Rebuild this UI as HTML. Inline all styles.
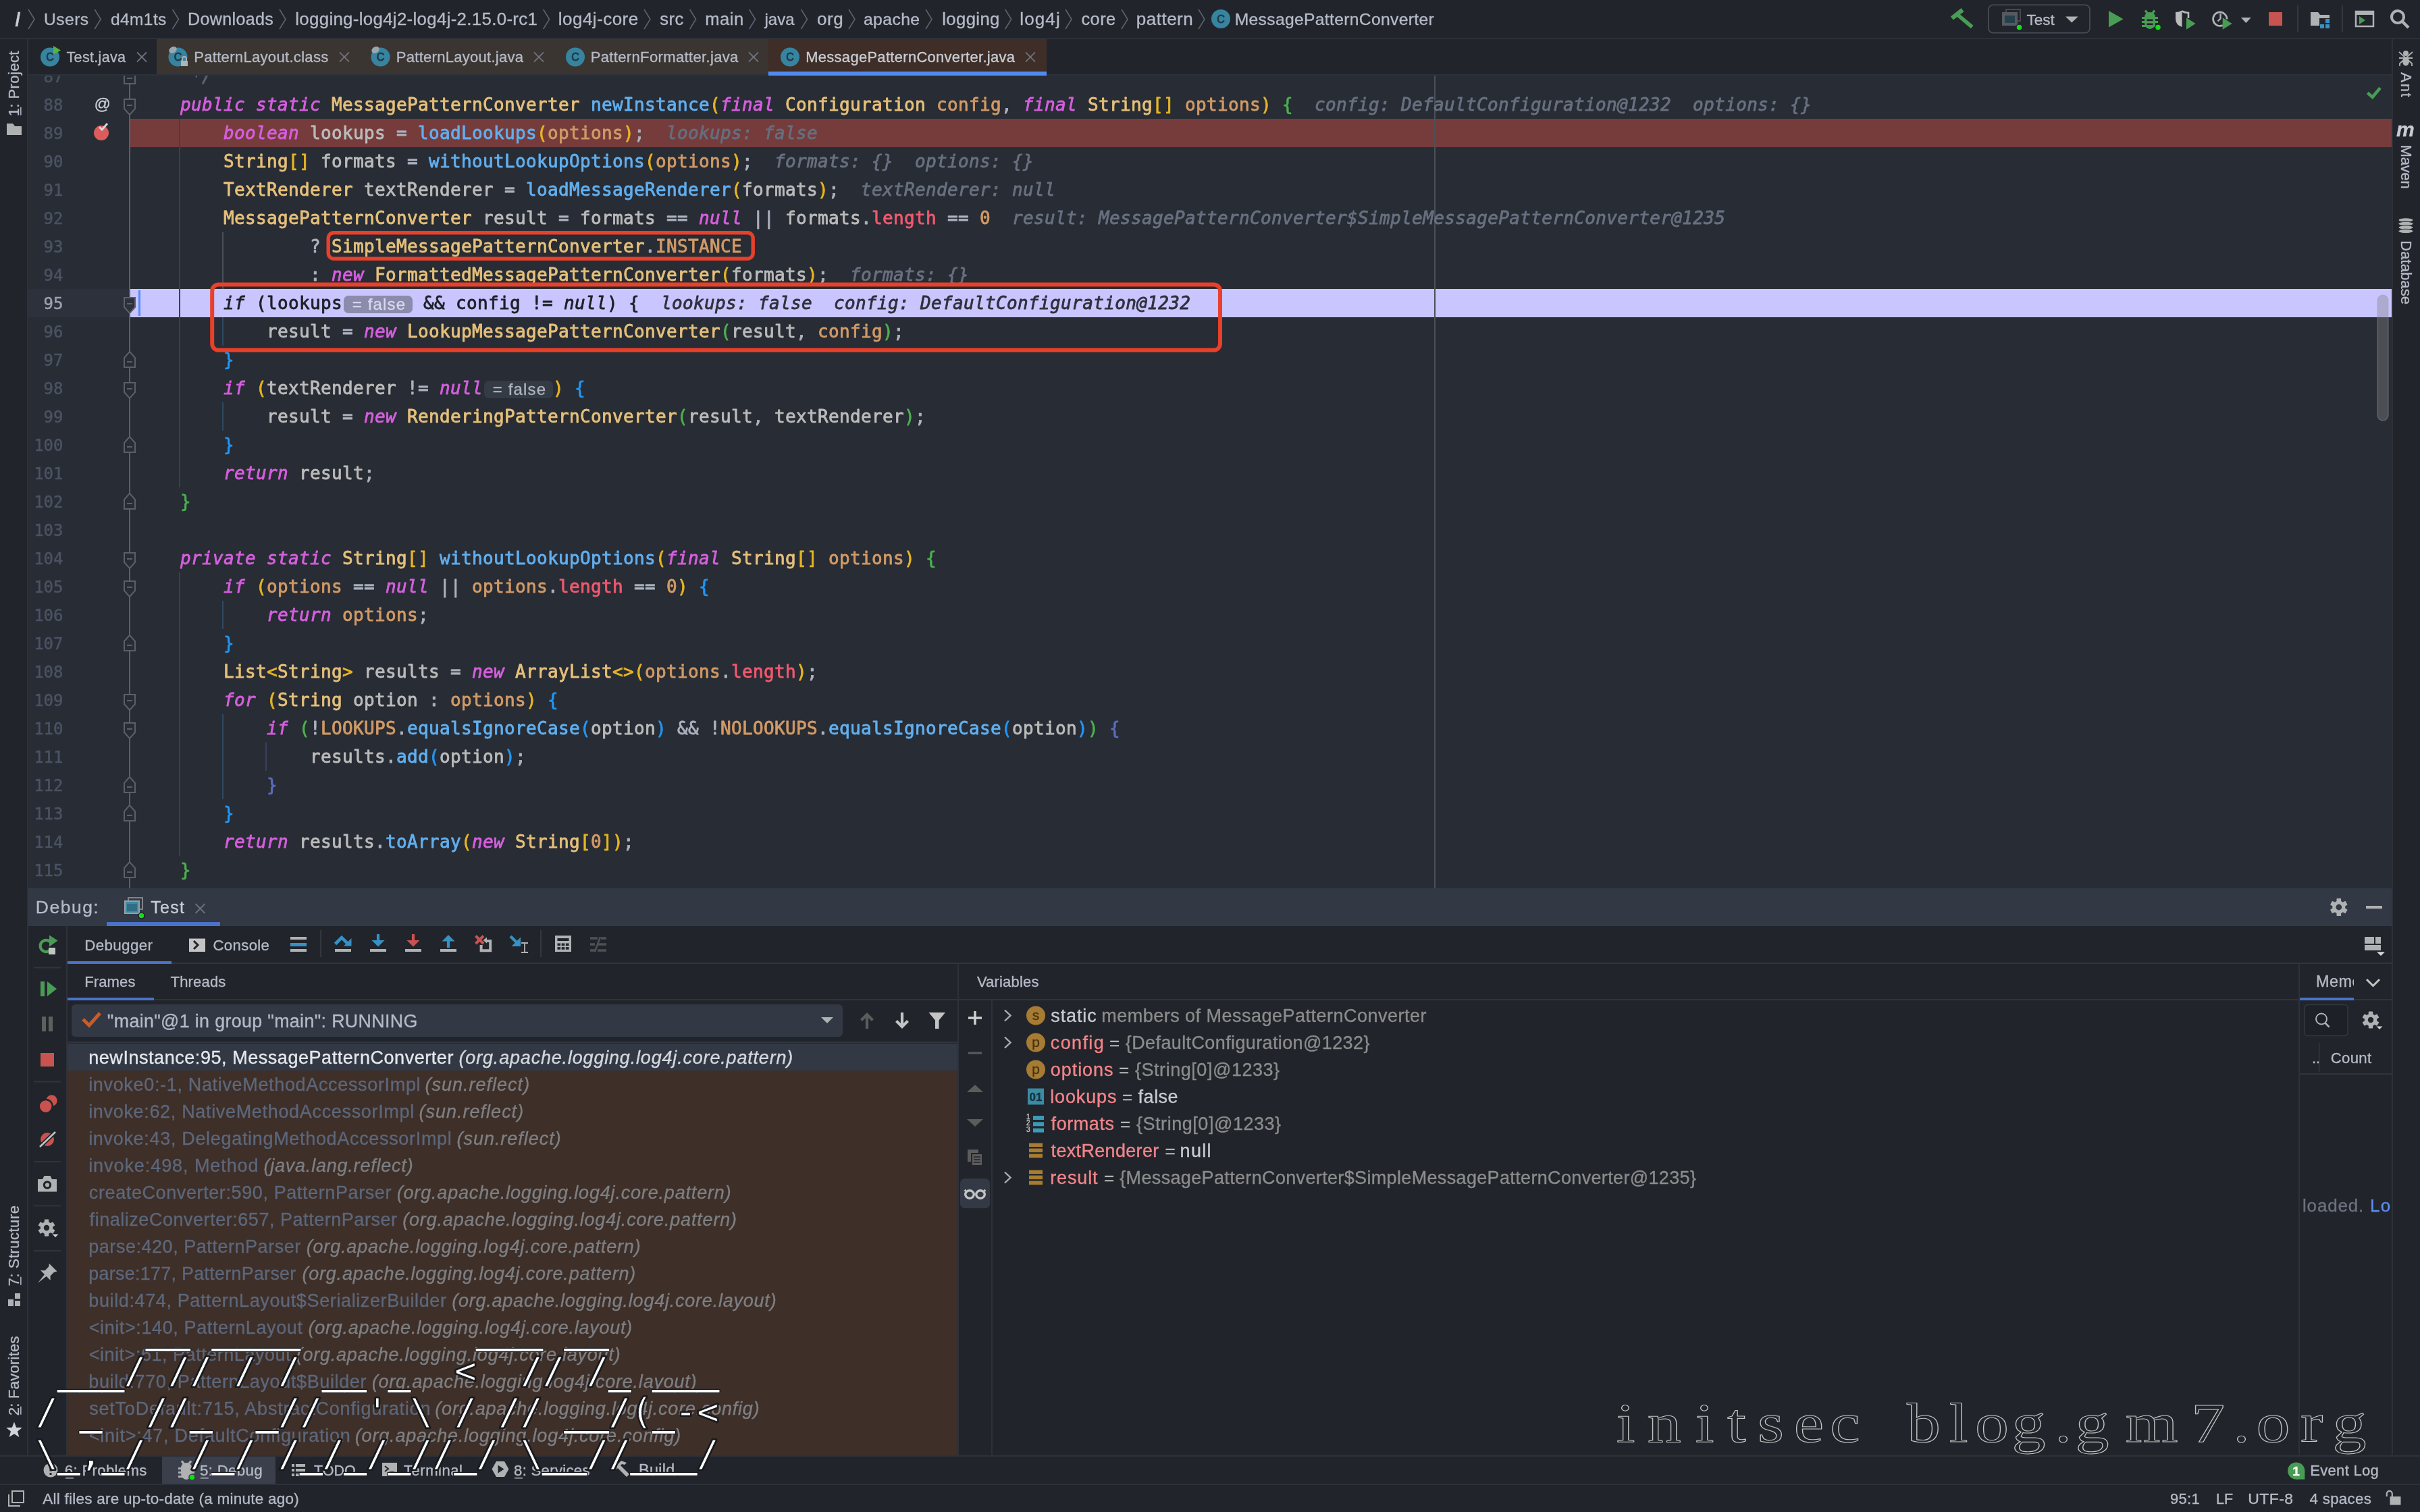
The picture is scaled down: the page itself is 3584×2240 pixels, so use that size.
<!DOCTYPE html>
<html><head><meta charset="utf-8"><title>MessagePatternConverter.java</title><style>
html,body{margin:0;padding:0;background:#21252b;}
body{width:3584px;height:2240px;overflow:hidden;}
svg{display:block;will-change:transform}
text{white-space:pre}
.u{font-family:"Liberation Sans",sans-serif}
.m{font-family:"DejaVu Sans Mono","Liberation Mono",monospace;font-size:26px;letter-spacing:0.35px}
.art text{font-family:"DejaVu Sans Mono","Liberation Mono",monospace}
.wm{font-family:"Liberation Serif",serif}
</style></head><body>
<svg width="3584" height="2240" viewBox="0 0 3584 2240">
<rect x="0" y="0" width="3584" height="2240" fill="#21252b"/>
<rect x="0" y="56" width="3584" height="2" fill="#2c313a"/>
<rect x="40" y="58" width="2" height="2098" fill="#2c313a"/>
<rect x="3542" y="58" width="2" height="2098" fill="#2c313a"/>
<text class="u" x="22.5" y="38" font-size="28" fill="#c8ccd4" stroke="#c8ccd4" stroke-width="0.35" style="font-weight:bold">/</text>
<path d="M42 14 L51 28.5 L42 43" fill="none" stroke="#5c6370" stroke-width="1.6"/>
<text class="u" x="65.1" y="37" font-size="24.65" fill="#b4bac6" stroke="#b4bac6" stroke-width="0.35" textLength="66.0" lengthAdjust="spacing">Users</text>
<path d="M140.2 14 L149.2 28.5 L140.2 43" fill="none" stroke="#5c6370" stroke-width="1.6"/>
<text class="u" x="163.97" y="37" font-size="24.51" fill="#b4bac6" stroke="#b4bac6" stroke-width="0.35" textLength="82.4" lengthAdjust="spacing">d4m1ts</text>
<path d="M255.5 14 L264.5 28.5 L255.5 43" fill="none" stroke="#5c6370" stroke-width="1.6"/>
<text class="u" x="277.95" y="37" font-size="25.02" fill="#b4bac6" stroke="#b4bac6" stroke-width="0.35" textLength="126.9" lengthAdjust="spacing">Downloads</text>
<path d="M414 14 L423 28.5 L414 43" fill="none" stroke="#5c6370" stroke-width="1.6"/>
<text class="u" x="437.26" y="37" font-size="25.88" fill="#b4bac6" stroke="#b4bac6" stroke-width="0.35" textLength="358.6" lengthAdjust="spacing">logging-log4j2-log4j-2.15.0-rc1</text>
<path d="M804.6 14 L813.6 28.5 L804.6 43" fill="none" stroke="#5c6370" stroke-width="1.6"/>
<text class="u" x="826.85" y="37" font-size="26.0" fill="#b4bac6" stroke="#b4bac6" stroke-width="0.35" textLength="118.3" lengthAdjust="spacing">log4j-core</text>
<path d="M954 14 L963 28.5 L954 43" fill="none" stroke="#5c6370" stroke-width="1.6"/>
<text class="u" x="977.29" y="37" font-size="25.57" fill="#b4bac6" stroke="#b4bac6" stroke-width="0.35" textLength="35.0" lengthAdjust="spacing">src</text>
<path d="M1021.6 14 L1030.6 28.5 L1021.6 43" fill="none" stroke="#5c6370" stroke-width="1.6"/>
<text class="u" x="1044.3" y="37" font-size="25.59" fill="#b4bac6" stroke="#b4bac6" stroke-width="0.35" textLength="57.0" lengthAdjust="spacing">main</text>
<path d="M1109.6 14 L1118.6 28.5 L1109.6 43" fill="none" stroke="#5c6370" stroke-width="1.6"/>
<text class="u" x="1132.49" y="37" font-size="24.0" fill="#b4bac6" stroke="#b4bac6" stroke-width="0.35" textLength="44.0" lengthAdjust="spacing">java</text>
<path d="M1186.5 14 L1195.5 28.5 L1186.5 43" fill="none" stroke="#5c6370" stroke-width="1.6"/>
<text class="u" x="1209.91" y="37" font-size="26.0" fill="#b4bac6" stroke="#b4bac6" stroke-width="0.35" textLength="38.8" lengthAdjust="spacing">org</text>
<path d="M1257 14 L1266 28.5 L1257 43" fill="none" stroke="#5c6370" stroke-width="1.6"/>
<text class="u" x="1278.95" y="37" font-size="24.72" fill="#b4bac6" stroke="#b4bac6" stroke-width="0.35" textLength="83.1" lengthAdjust="spacing">apache</text>
<path d="M1371 14 L1380 28.5 L1371 43" fill="none" stroke="#5c6370" stroke-width="1.6"/>
<text class="u" x="1395.27" y="37" font-size="25.7" fill="#b4bac6" stroke="#b4bac6" stroke-width="0.35" textLength="85.1" lengthAdjust="spacing">logging</text>
<path d="M1488.7 14 L1497.7 28.5 L1488.7 43" fill="none" stroke="#5c6370" stroke-width="1.6"/>
<text class="u" x="1510.25" y="37" font-size="26.0" fill="#b4bac6" stroke="#b4bac6" stroke-width="0.35" textLength="59.5" lengthAdjust="spacing">log4j</text>
<path d="M1578 14 L1587 28.5 L1578 43" fill="none" stroke="#5c6370" stroke-width="1.6"/>
<text class="u" x="1601.52" y="37" font-size="25.35" fill="#b4bac6" stroke="#b4bac6" stroke-width="0.35" textLength="50.6" lengthAdjust="spacing">core</text>
<path d="M1661 14 L1670 28.5 L1661 43" fill="none" stroke="#5c6370" stroke-width="1.6"/>
<text class="u" x="1682.82" y="37" font-size="26.0" fill="#b4bac6" stroke="#b4bac6" stroke-width="0.35" textLength="83.9" lengthAdjust="spacing">pattern</text>
<path d="M1775 14 L1784 28.5 L1775 43" fill="none" stroke="#5c6370" stroke-width="1.6"/>
<circle cx="1808" cy="28" r="14" fill="#36849f"/>
<text class="u" x="1808" y="33.6" font-size="16" fill="#1f3a47" text-anchor="middle" stroke="#1f3a47" stroke-width="0.9">C</text>
<text class="u" x="1828.68" y="37" font-size="24.65" fill="#b4bac6" stroke="#b4bac6" stroke-width="0.35" textLength="295.0" lengthAdjust="spacing">MessagePatternConverter</text>
<rect x="2888.7" y="17.6" width="20" height="6.4" fill="#499c54" transform="rotate(-38 2898.7 20.8)"/>
<rect x="2897" y="28.2" width="27" height="5.6" fill="#499c54" transform="rotate(40 2910 31)"/>
<rect x="2945" y="7.2" width="150" height="41.6" rx="7" fill="none" stroke="#4b505b" stroke-width="1.6"/>
<rect x="2971" y="14" width="21" height="17" fill="none" stroke="#444952" stroke-width="2"/>
<rect x="2966" y="19" width="21" height="18" fill="#555a63" stroke="#555a63" stroke-width="2"/>
<rect x="2969" y="23" width="15" height="11" fill="#27414c"/>
<circle cx="2990.5" cy="40.5" r="4.5" fill="#10e010" stroke="#21252b" stroke-width="1.5"/>
<text class="u" x="3001.5" y="36.7" font-size="22.5" fill="#b4bac6" stroke="#b4bac6" stroke-width="0.35">Test</text>
<path d="M3059 24.5 h18.6 l-9.3 9 z" fill="#afb1b3"/>
<path d="M3123 16 L3144.6 28.3 L3123 40.6 Z" fill="#499c54"/>
<path d="M3177 15.5 l4.5 5.5 M3191 15.5 l-4.5 5.5" fill="none" stroke="#499c54" stroke-width="3.2"/>
<path d="M3176 25 a8 7 0 0 1 16 0 v9 a8 9 0 0 1 -16 0 z" fill="#499c54"/>
<path d="M3172 26.5 h24 M3172 32.5 h24 M3172 38.5 h24" fill="none" stroke="#499c54" stroke-width="3"/>
<rect x="3179.5" y="28.5" width="9" height="2.6" fill="#21252b"/>
<rect x="3179.5" y="34.5" width="9" height="2.6" fill="#21252b"/>
<circle cx="3196" cy="40.6" r="4.5" fill="#10e010" stroke="#21252b" stroke-width="1.5"/>
<path d="M3222 18 q5 0 9.5 -2.5 v24.5 q-9.5 -3 -9.5 -12 z" fill="#b9bbbd"/>
<path d="M3231.5 16.5 q4.5 2.5 9.5 2.5 v8" fill="none" stroke="#b9bbbd" stroke-width="2.6"/>
<path d="M3238 26.3 L3251.6 35 L3238 43.8 Z" fill="#499c54"/>
<path d="M3292 37.5 a10.2 10.2 0 1 1 6 -9" fill="none" stroke="#afb1b3" stroke-width="2.8"/>
<path d="M3288.5 20.5 v7 l-4 4" fill="none" stroke="#afb1b3" stroke-width="2.4"/>
<path d="M3291.7 26.3 L3305.8 35 L3291.7 43.8 Z" fill="#499c54"/>
<path d="M3318.8 26 h15 l-7.5 8 z" fill="#afb1b3"/>
<rect x="3360" y="18" width="20" height="20" fill="#c75450"/>
<rect x="3402" y="8" width="2" height="40" fill="#33383f"/>
<path d="M3422 18 h11 l3 4 h14 v16 h-28 z" fill="#afb1b3"/>
<rect x="3435" y="27" width="16" height="16" fill="#21252b"/>
<rect x="3444" y="28" width="6" height="6" fill="#3592c4"/>
<rect x="3436" y="36" width="6" height="6" fill="#3592c4"/>
<rect x="3444" y="36" width="6" height="6" fill="#3592c4"/>
<rect x="3468" y="8" width="2" height="40" fill="#33383f"/>
<rect x="3489" y="17" width="26" height="22" fill="none" stroke="#afb1b3" stroke-width="2.5"/>
<rect x="3488" y="16" width="28" height="6" fill="#afb1b3"/>
<path d="M3494 24 L3503 30 L3494 36 Z" fill="#499c54"/>
<circle cx="3551" cy="25" r="9" fill="none" stroke="#afb1b3" stroke-width="4"/>
<path d="M3558 32 L3567 41" fill="none" stroke="#afb1b3" stroke-width="4.5"/>
<rect x="232" y="58" width="906" height="52" fill="#3b3532"/>
<rect x="1138" y="58" width="412" height="48" fill="#3e2e27"/>
<rect x="1138" y="106" width="412" height="6" fill="#528bf0"/>
<rect x="42" y="110" width="3500" height="2" fill="#2c313a"/>
<rect x="1138" y="106" width="412" height="6" fill="#528bf0"/>
<circle cx="74" cy="84.5" r="14" fill="#36849f"/>
<text class="u" x="74" y="90.1" font-size="16" fill="#1f3a47" text-anchor="middle" stroke="#1f3a47" stroke-width="0.9">C</text>
<path d="M79 68 L90 74.5 L79 81 Z" fill="#57b33e"/>
<text class="u" x="98.52" y="91.7" font-size="21.5" fill="#b4bac6" stroke="#b4bac6" stroke-width="0.35" textLength="87.5" lengthAdjust="spacing">Test.java</text>
<path d="M203 77.5 L217 91.5 M217 77.5 L203 91.5" fill="none" stroke="#6c717b" stroke-width="1.8"/>
<circle cx="263.5" cy="84.5" r="14" fill="#36849f"/>
<text class="u" x="263.5" y="90.1" font-size="16" fill="#1f3a47" text-anchor="middle" stroke="#1f3a47" stroke-width="0.9">C</text>
<ellipse cx="256" cy="74" rx="6" ry="4.5" fill="#9aa7b0" transform="rotate(-30 256 74)"/>
<rect x="268" y="90" width="10" height="8" fill="#b0b3b8"/>
<path d="M270 90 v-3 a3 3 0 0 1 6 0 v3" fill="none" stroke="#b0b3b8" stroke-width="1.8"/>
<text class="u" x="287.19" y="91.7" font-size="22.11" fill="#b4bac6" stroke="#b4bac6" stroke-width="0.35" textLength="199.1" lengthAdjust="spacing">PatternLayout.class</text>
<path d="M503 77.5 L517 91.5 M517 77.5 L503 91.5" fill="none" stroke="#6c717b" stroke-width="1.8"/>
<circle cx="563.5" cy="84.5" r="14" fill="#36849f"/>
<text class="u" x="563.5" y="90.1" font-size="16" fill="#1f3a47" text-anchor="middle" stroke="#1f3a47" stroke-width="0.9">C</text>
<ellipse cx="556" cy="74" rx="6" ry="4.5" fill="#9aa7b0" transform="rotate(-30 556 74)"/>
<text class="u" x="586.79" y="91.7" font-size="22.01" fill="#b4bac6" stroke="#b4bac6" stroke-width="0.35" textLength="188.2" lengthAdjust="spacing">PatternLayout.java</text>
<path d="M791 77.5 L805 91.5 M805 77.5 L791 91.5" fill="none" stroke="#6c717b" stroke-width="1.8"/>
<circle cx="852" cy="84.5" r="14" fill="#36849f"/>
<text class="u" x="852" y="90.1" font-size="16" fill="#1f3a47" text-anchor="middle" stroke="#1f3a47" stroke-width="0.9">C</text>
<text class="u" x="874.69" y="91.7" font-size="22.05" fill="#b4bac6" stroke="#b4bac6" stroke-width="0.35" textLength="218.7" lengthAdjust="spacing">PatternFormatter.java</text>
<path d="M1109 77.5 L1123 91.5 M1123 77.5 L1109 91.5" fill="none" stroke="#6c717b" stroke-width="1.8"/>
<circle cx="1170" cy="84.5" r="14" fill="#36849f"/>
<text class="u" x="1170" y="90.1" font-size="16" fill="#1f3a47" text-anchor="middle" stroke="#1f3a47" stroke-width="0.9">C</text>
<text class="u" x="1193.2" y="91.7" font-size="21.92" fill="#c8ccd4" stroke="#c8ccd4" stroke-width="0.35" textLength="309.8" lengthAdjust="spacing">MessagePatternConverter.java</text>
<path d="M1519 77.5 L1533 91.5 M1533 77.5 L1519 91.5" fill="none" stroke="#6c717b" stroke-width="1.8"/>
<text class="u" font-size="22" fill="#b4bac6" stroke="#b4bac6" stroke-width="0.35" transform="translate(27.6,172.2) rotate(-90)" textLength="96.7" lengthAdjust="spacing">1: Project</text>
<rect x="30.1" y="158.7" width="1.5" height="12" fill="#b4bac6"/>
<path d="M10 183 h9 l3 4 h10 v13 h-22 z" fill="#afb1b3"/>
<text class="u" font-size="22" fill="#b4bac6" stroke="#b4bac6" stroke-width="0.35" transform="translate(27.6,1905.2) rotate(-90)" textLength="119.1" lengthAdjust="spacing">7: Structure</text>
<rect x="30.1" y="1891.7" width="1.5" height="12" fill="#b4bac6"/>
<rect x="12" y="1925" width="8" height="10" fill="#afb1b3"/>
<rect x="22" y="1916" width="8" height="8" fill="#afb1b3"/>
<rect x="22" y="1927" width="8" height="8" fill="#afb1b3"/>
<text class="u" font-size="22" fill="#b4bac6" stroke="#b4bac6" stroke-width="0.35" transform="translate(27.6,2097.2) rotate(-90)" textLength="117.7" lengthAdjust="spacing">2: Favorites</text>
<rect x="30.1" y="2083.7" width="1.5" height="12" fill="#b4bac6"/>
<polygon points="21.0,2106.5 24.1,2114.8 32.9,2115.1 26.0,2120.6 28.3,2129.1 21.0,2124.2 13.7,2129.1 16.0,2120.6 9.1,2115.1 17.9,2114.8" fill="#d0d3d8"/>
<circle cx="3563" cy="79" r="4" fill="#afb1b3"/>
<ellipse cx="3563" cy="91" rx="5" ry="6.5" fill="#afb1b3"/>
<path d="M3553 77 L3563 86 L3573 77 M3553 86 H3573 M3554 98 V94 L3563 86 L3572 94 V98" fill="none" stroke="#afb1b3" stroke-width="1.8"/>
<text class="u" font-size="22" fill="#b4bac6" stroke="#b4bac6" stroke-width="0.35" transform="translate(3556.08,107.2) rotate(90)" textLength="36.6" lengthAdjust="spacing">Ant</text>
<text class="u" x="3549" y="202" font-size="30" fill="#c8ccd4" stroke="#c8ccd4" stroke-width="0.35" style="font-weight:bold;font-style:italic">m</text>
<text class="u" font-size="22" fill="#b4bac6" stroke="#b4bac6" stroke-width="0.35" transform="translate(3556.08,214.5) rotate(90)" textLength="65.3" lengthAdjust="spacing">Maven</text>
<ellipse cx="3563" cy="326.0" rx="11" ry="3.2" fill="#afb1b3" stroke="#21252b" stroke-width="1"/>
<ellipse cx="3563" cy="331.5" rx="11" ry="3.2" fill="#afb1b3" stroke="#21252b" stroke-width="1"/>
<ellipse cx="3563" cy="337.0" rx="11" ry="3.2" fill="#afb1b3" stroke="#21252b" stroke-width="1"/>
<ellipse cx="3563" cy="342.5" rx="11" ry="3.2" fill="#afb1b3" stroke="#21252b" stroke-width="1"/>
<text class="u" font-size="22" fill="#b4bac6" stroke="#b4bac6" stroke-width="0.35" transform="translate(3556.08,356.3) rotate(90)" textLength="94.7" lengthAdjust="spacing">Database</text>
<rect x="42" y="112" width="3500" height="1204" fill="#282c34"/>
<rect x="193" y="176" width="3349" height="42" fill="#763c3c"/>
<rect x="193" y="428" width="3349" height="42" fill="#c8c5ff"/>
<rect x="42" y="428" width="151" height="42" fill="#2c313c"/>
<rect x="2124" y="112" width="2" height="1204" fill="#4b5059"/>
<rect x="265" y="176" width="2" height="546" fill="#2f4a3a"/>
<rect x="265" y="848" width="2" height="420" fill="#2f4a3a"/>
<rect x="329" y="344" width="2" height="84" fill="#4a4f59"/>
<rect x="329" y="470" width="2" height="42" fill="#2e4a62"/>
<rect x="329" y="596" width="2" height="42" fill="#2e4a62"/>
<rect x="329" y="890" width="2" height="42" fill="#2e4a62"/>
<rect x="329" y="1058" width="2" height="126" fill="#2e4a62"/>
<rect x="393" y="1100" width="2" height="42" fill="#3b3f60"/>
<rect x="205" y="430" width="3" height="38" fill="#528bff"/>
<clipPath id="edclip"><rect x="42" y="112" width="3500" height="1204"/></clipPath>
<g clip-path="url(#edclip)">
<text class="m" y="122" stroke-width="0.8" stroke-linejoin="round" xml:space="preserve"><tspan x="283" fill="#5c6370" stroke="#5c6370" font-style="italic">*/</tspan></text>
<text class="m" y="164" stroke-width="0.8" stroke-linejoin="round" xml:space="preserve"><tspan x="267" fill="#d55fde" stroke="#d55fde" font-style="italic">public static</tspan><tspan x="491" fill="#e5c07b" stroke="#e5c07b">MessagePatternConverter</tspan><tspan x="875" fill="#61afef" stroke="#61afef">newInstance</tspan><tspan x="1051" fill="#e6b422" stroke="#e6b422">(</tspan><tspan x="1067" fill="#d55fde" stroke="#d55fde" font-style="italic">final</tspan><tspan x="1163" fill="#e5c07b" stroke="#e5c07b">Configuration</tspan><tspan x="1387" fill="#d19a66" stroke="#d19a66">config</tspan><tspan x="1483" fill="#abb2bf" stroke="#abb2bf">, </tspan><tspan x="1515" fill="#d55fde" stroke="#d55fde" font-style="italic">final</tspan><tspan x="1611" fill="#e5c07b" stroke="#e5c07b">String</tspan><tspan x="1707" fill="#e6b422" stroke="#e6b422">[]</tspan><tspan x="1755" fill="#d19a66" stroke="#d19a66">options</tspan><tspan x="1867" fill="#e6b422" stroke="#e6b422">)</tspan><tspan x="1899" fill="#4caf50" stroke="#4caf50">{</tspan><tspan x="1947" fill="#687080" stroke="#687080" font-style="italic">config: DefaultConfiguration@1232  options: {}</tspan></text>
<text class="m" y="206" stroke-width="0.8" stroke-linejoin="round" xml:space="preserve"><tspan x="331" fill="#d55fde" stroke="#d55fde" font-style="italic">boolean</tspan><tspan x="459" fill="#bbbbbb" stroke="#bbbbbb">lookups</tspan><tspan x="587" fill="#abb2bf" stroke="#abb2bf">= </tspan><tspan x="619" fill="#61afef" stroke="#61afef">loadLookups</tspan><tspan x="795" fill="#e6b422" stroke="#e6b422">(</tspan><tspan x="811" fill="#d19a66" stroke="#d19a66">options</tspan><tspan x="923" fill="#e6b422" stroke="#e6b422">)</tspan><tspan x="939" fill="#abb2bf" stroke="#abb2bf">;</tspan><tspan x="987" fill="#666e7e" stroke="#666e7e" font-style="italic">lookups: false</tspan></text>
<text class="m" y="248" stroke-width="0.8" stroke-linejoin="round" xml:space="preserve"><tspan x="331" fill="#e5c07b" stroke="#e5c07b">String</tspan><tspan x="427" fill="#e6b422" stroke="#e6b422">[]</tspan><tspan x="475" fill="#bbbbbb" stroke="#bbbbbb">formats</tspan><tspan x="603" fill="#abb2bf" stroke="#abb2bf">= </tspan><tspan x="635" fill="#61afef" stroke="#61afef">withoutLookupOptions</tspan><tspan x="955" fill="#e6b422" stroke="#e6b422">(</tspan><tspan x="971" fill="#d19a66" stroke="#d19a66">options</tspan><tspan x="1083" fill="#e6b422" stroke="#e6b422">)</tspan><tspan x="1099" fill="#abb2bf" stroke="#abb2bf">;</tspan><tspan x="1147" fill="#687080" stroke="#687080" font-style="italic">formats: {}  options: {}</tspan></text>
<text class="m" y="290" stroke-width="0.8" stroke-linejoin="round" xml:space="preserve"><tspan x="331" fill="#e5c07b" stroke="#e5c07b">TextRenderer</tspan><tspan x="539" fill="#bbbbbb" stroke="#bbbbbb">textRenderer</tspan><tspan x="747" fill="#abb2bf" stroke="#abb2bf">= </tspan><tspan x="779" fill="#61afef" stroke="#61afef">loadMessageRenderer</tspan><tspan x="1083" fill="#e6b422" stroke="#e6b422">(</tspan><tspan x="1099" fill="#bbbbbb" stroke="#bbbbbb">formats</tspan><tspan x="1211" fill="#e6b422" stroke="#e6b422">)</tspan><tspan x="1227" fill="#abb2bf" stroke="#abb2bf">;</tspan><tspan x="1275" fill="#687080" stroke="#687080" font-style="italic">textRenderer: null</tspan></text>
<text class="m" y="332" stroke-width="0.8" stroke-linejoin="round" xml:space="preserve"><tspan x="331" fill="#e5c07b" stroke="#e5c07b">MessagePatternConverter</tspan><tspan x="715" fill="#bbbbbb" stroke="#bbbbbb">result</tspan><tspan x="827" fill="#abb2bf" stroke="#abb2bf">= </tspan><tspan x="859" fill="#bbbbbb" stroke="#bbbbbb">formats</tspan><tspan x="987" fill="#abb2bf" stroke="#abb2bf">== </tspan><tspan x="1035" fill="#d55fde" stroke="#d55fde" font-style="italic">null</tspan><tspan x="1115" fill="#abb2bf" stroke="#abb2bf">|| </tspan><tspan x="1163" fill="#bbbbbb" stroke="#bbbbbb">formats</tspan><tspan x="1275" fill="#abb2bf" stroke="#abb2bf">.</tspan><tspan x="1291" fill="#ef596f" stroke="#ef596f">length</tspan><tspan x="1403" fill="#abb2bf" stroke="#abb2bf">== </tspan><tspan x="1451" fill="#d19a66" stroke="#d19a66">0</tspan><tspan x="1499" fill="#687080" stroke="#687080" font-style="italic">result: MessagePatternConverter$SimpleMessagePatternConverter@1235</tspan></text>
<text class="m" y="374" stroke-width="0.8" stroke-linejoin="round" xml:space="preserve"><tspan x="459" fill="#abb2bf" stroke="#abb2bf">? </tspan><tspan x="491" fill="#e5c07b" stroke="#e5c07b">SimpleMessagePatternConverter</tspan><tspan x="955" fill="#abb2bf" stroke="#abb2bf">.</tspan><tspan x="971" fill="#d19a66" stroke="#d19a66">INSTANCE</tspan></text>
<text class="m" y="416" stroke-width="0.8" stroke-linejoin="round" xml:space="preserve"><tspan x="459" fill="#abb2bf" stroke="#abb2bf">: </tspan><tspan x="491" fill="#d55fde" stroke="#d55fde" font-style="italic">new</tspan><tspan x="555" fill="#e5c07b" stroke="#e5c07b">FormattedMessagePatternConverter</tspan><tspan x="1067" fill="#e6b422" stroke="#e6b422">(</tspan><tspan x="1083" fill="#bbbbbb" stroke="#bbbbbb">formats</tspan><tspan x="1195" fill="#e6b422" stroke="#e6b422">)</tspan><tspan x="1211" fill="#abb2bf" stroke="#abb2bf">;</tspan><tspan x="1259" fill="#687080" stroke="#687080" font-style="italic">formats: {}</tspan></text>
<rect x="509" y="438" width="102" height="26" fill="#8b8bab" rx="7"/>
<text class="u" x="521.83" y="459" font-size="24.0" fill="#d8d8f0" stroke="#d8d8f0" stroke-width="0.35" textLength="78.2" lengthAdjust="spacing">= false</text>
<text class="m" y="458" stroke-width="0.8" stroke-linejoin="round" xml:space="preserve"><tspan x="331" fill="#1d2026" stroke="#1d2026" font-style="italic">if</tspan><tspan x="379" fill="#1d2026" stroke="#1d2026">(lookups</tspan><tspan x="627" fill="#1d2026" stroke="#1d2026">&amp;&amp; config != </tspan><tspan x="835" fill="#1d2026" stroke="#1d2026" font-style="italic">null</tspan><tspan x="899" fill="#1d2026" stroke="#1d2026">) {</tspan><tspan x="979" fill="#30303c" stroke="#30303c" font-style="italic">lookups: false  config: DefaultConfiguration@1232</tspan></text>
<text class="m" y="500" stroke-width="0.8" stroke-linejoin="round" xml:space="preserve"><tspan x="395" fill="#bbbbbb" stroke="#bbbbbb">result</tspan><tspan x="507" fill="#abb2bf" stroke="#abb2bf">= </tspan><tspan x="539" fill="#d55fde" stroke="#d55fde" font-style="italic">new</tspan><tspan x="603" fill="#e5c07b" stroke="#e5c07b">LookupMessagePatternConverter</tspan><tspan x="1067" fill="#4caf50" stroke="#4caf50">(</tspan><tspan x="1083" fill="#bbbbbb" stroke="#bbbbbb">result</tspan><tspan x="1179" fill="#abb2bf" stroke="#abb2bf">, </tspan><tspan x="1211" fill="#d19a66" stroke="#d19a66">config</tspan><tspan x="1307" fill="#4caf50" stroke="#4caf50">)</tspan><tspan x="1323" fill="#abb2bf" stroke="#abb2bf">;</tspan></text>
<text class="m" y="542" stroke-width="0.8" stroke-linejoin="round" xml:space="preserve"><tspan x="331" fill="#2196f3" stroke="#2196f3">}</tspan></text>
<rect x="717" y="564" width="102" height="26" fill="#353b45" rx="7"/>
<text class="u" x="729.83" y="585" font-size="24.0" fill="#aeb3bd" stroke="#aeb3bd" stroke-width="0.35" textLength="78.2" lengthAdjust="spacing">= false</text>
<text class="m" y="584" stroke-width="0.8" stroke-linejoin="round" xml:space="preserve"><tspan x="331" fill="#d55fde" stroke="#d55fde" font-style="italic">if</tspan><tspan x="379" fill="#e6b422" stroke="#e6b422">(</tspan><tspan x="395" fill="#bbbbbb" stroke="#bbbbbb">textRenderer</tspan><tspan x="603" fill="#abb2bf" stroke="#abb2bf">!= </tspan><tspan x="651" fill="#d55fde" stroke="#d55fde" font-style="italic">null</tspan><tspan x="819" fill="#e6b422" stroke="#e6b422">)</tspan><tspan x="851" fill="#2196f3" stroke="#2196f3">{</tspan></text>
<text class="m" y="626" stroke-width="0.8" stroke-linejoin="round" xml:space="preserve"><tspan x="395" fill="#bbbbbb" stroke="#bbbbbb">result</tspan><tspan x="507" fill="#abb2bf" stroke="#abb2bf">= </tspan><tspan x="539" fill="#d55fde" stroke="#d55fde" font-style="italic">new</tspan><tspan x="603" fill="#e5c07b" stroke="#e5c07b">RenderingPatternConverter</tspan><tspan x="1003" fill="#4caf50" stroke="#4caf50">(</tspan><tspan x="1019" fill="#bbbbbb" stroke="#bbbbbb">result</tspan><tspan x="1115" fill="#abb2bf" stroke="#abb2bf">, </tspan><tspan x="1147" fill="#bbbbbb" stroke="#bbbbbb">textRenderer</tspan><tspan x="1339" fill="#4caf50" stroke="#4caf50">)</tspan><tspan x="1355" fill="#abb2bf" stroke="#abb2bf">;</tspan></text>
<text class="m" y="668" stroke-width="0.8" stroke-linejoin="round" xml:space="preserve"><tspan x="331" fill="#2196f3" stroke="#2196f3">}</tspan></text>
<text class="m" y="710" stroke-width="0.8" stroke-linejoin="round" xml:space="preserve"><tspan x="331" fill="#d55fde" stroke="#d55fde" font-style="italic">return</tspan><tspan x="443" fill="#bbbbbb" stroke="#bbbbbb">result</tspan><tspan x="539" fill="#abb2bf" stroke="#abb2bf">;</tspan></text>
<text class="m" y="752" stroke-width="0.8" stroke-linejoin="round" xml:space="preserve"><tspan x="267" fill="#4caf50" stroke="#4caf50">}</tspan></text>
<text class="m" y="836" stroke-width="0.8" stroke-linejoin="round" xml:space="preserve"><tspan x="267" fill="#d55fde" stroke="#d55fde" font-style="italic">private static</tspan><tspan x="507" fill="#e5c07b" stroke="#e5c07b">String</tspan><tspan x="603" fill="#e6b422" stroke="#e6b422">[]</tspan><tspan x="651" fill="#61afef" stroke="#61afef">withoutLookupOptions</tspan><tspan x="971" fill="#e6b422" stroke="#e6b422">(</tspan><tspan x="987" fill="#d55fde" stroke="#d55fde" font-style="italic">final</tspan><tspan x="1083" fill="#e5c07b" stroke="#e5c07b">String</tspan><tspan x="1179" fill="#e6b422" stroke="#e6b422">[]</tspan><tspan x="1227" fill="#d19a66" stroke="#d19a66">options</tspan><tspan x="1339" fill="#e6b422" stroke="#e6b422">)</tspan><tspan x="1371" fill="#4caf50" stroke="#4caf50">{</tspan></text>
<text class="m" y="878" stroke-width="0.8" stroke-linejoin="round" xml:space="preserve"><tspan x="331" fill="#d55fde" stroke="#d55fde" font-style="italic">if</tspan><tspan x="379" fill="#e6b422" stroke="#e6b422">(</tspan><tspan x="395" fill="#d19a66" stroke="#d19a66">options</tspan><tspan x="523" fill="#abb2bf" stroke="#abb2bf">== </tspan><tspan x="571" fill="#d55fde" stroke="#d55fde" font-style="italic">null</tspan><tspan x="651" fill="#abb2bf" stroke="#abb2bf">|| </tspan><tspan x="699" fill="#d19a66" stroke="#d19a66">options</tspan><tspan x="811" fill="#abb2bf" stroke="#abb2bf">.</tspan><tspan x="827" fill="#ef596f" stroke="#ef596f">length</tspan><tspan x="939" fill="#abb2bf" stroke="#abb2bf">== </tspan><tspan x="987" fill="#d19a66" stroke="#d19a66">0</tspan><tspan x="1003" fill="#e6b422" stroke="#e6b422">)</tspan><tspan x="1035" fill="#2196f3" stroke="#2196f3">{</tspan></text>
<text class="m" y="920" stroke-width="0.8" stroke-linejoin="round" xml:space="preserve"><tspan x="395" fill="#d55fde" stroke="#d55fde" font-style="italic">return</tspan><tspan x="507" fill="#d19a66" stroke="#d19a66">options</tspan><tspan x="619" fill="#abb2bf" stroke="#abb2bf">;</tspan></text>
<text class="m" y="962" stroke-width="0.8" stroke-linejoin="round" xml:space="preserve"><tspan x="331" fill="#2196f3" stroke="#2196f3">}</tspan></text>
<text class="m" y="1004" stroke-width="0.8" stroke-linejoin="round" xml:space="preserve"><tspan x="331" fill="#e5c07b" stroke="#e5c07b">List</tspan><tspan x="395" fill="#e6b422" stroke="#e6b422">&lt;</tspan><tspan x="411" fill="#e5c07b" stroke="#e5c07b">String</tspan><tspan x="507" fill="#e6b422" stroke="#e6b422">&gt;</tspan><tspan x="539" fill="#bbbbbb" stroke="#bbbbbb">results</tspan><tspan x="667" fill="#abb2bf" stroke="#abb2bf">= </tspan><tspan x="699" fill="#d55fde" stroke="#d55fde" font-style="italic">new</tspan><tspan x="763" fill="#e5c07b" stroke="#e5c07b">ArrayList</tspan><tspan x="907" fill="#e6b422" stroke="#e6b422">&lt;&gt;</tspan><tspan x="939" fill="#e6b422" stroke="#e6b422">(</tspan><tspan x="955" fill="#d19a66" stroke="#d19a66">options</tspan><tspan x="1067" fill="#abb2bf" stroke="#abb2bf">.</tspan><tspan x="1083" fill="#ef596f" stroke="#ef596f">length</tspan><tspan x="1179" fill="#e6b422" stroke="#e6b422">)</tspan><tspan x="1195" fill="#abb2bf" stroke="#abb2bf">;</tspan></text>
<text class="m" y="1046" stroke-width="0.8" stroke-linejoin="round" xml:space="preserve"><tspan x="331" fill="#d55fde" stroke="#d55fde" font-style="italic">for</tspan><tspan x="395" fill="#e6b422" stroke="#e6b422">(</tspan><tspan x="411" fill="#e5c07b" stroke="#e5c07b">String</tspan><tspan x="523" fill="#bbbbbb" stroke="#bbbbbb">option</tspan><tspan x="635" fill="#abb2bf" stroke="#abb2bf">: </tspan><tspan x="667" fill="#d19a66" stroke="#d19a66">options</tspan><tspan x="779" fill="#e6b422" stroke="#e6b422">)</tspan><tspan x="811" fill="#2196f3" stroke="#2196f3">{</tspan></text>
<text class="m" y="1088" stroke-width="0.8" stroke-linejoin="round" xml:space="preserve"><tspan x="395" fill="#d55fde" stroke="#d55fde" font-style="italic">if</tspan><tspan x="443" fill="#4caf50" stroke="#4caf50">(</tspan><tspan x="459" fill="#abb2bf" stroke="#abb2bf">!</tspan><tspan x="475" fill="#d19a66" stroke="#d19a66">LOOKUPS</tspan><tspan x="587" fill="#abb2bf" stroke="#abb2bf">.</tspan><tspan x="603" fill="#61afef" stroke="#61afef">equalsIgnoreCase</tspan><tspan x="859" fill="#2196f3" stroke="#2196f3">(</tspan><tspan x="875" fill="#bbbbbb" stroke="#bbbbbb">option</tspan><tspan x="971" fill="#2196f3" stroke="#2196f3">)</tspan><tspan x="1003" fill="#abb2bf" stroke="#abb2bf">&amp;&amp; !</tspan><tspan x="1067" fill="#d19a66" stroke="#d19a66">NOLOOKUPS</tspan><tspan x="1211" fill="#abb2bf" stroke="#abb2bf">.</tspan><tspan x="1227" fill="#61afef" stroke="#61afef">equalsIgnoreCase</tspan><tspan x="1483" fill="#2196f3" stroke="#2196f3">(</tspan><tspan x="1499" fill="#bbbbbb" stroke="#bbbbbb">option</tspan><tspan x="1595" fill="#2196f3" stroke="#2196f3">)</tspan><tspan x="1611" fill="#4caf50" stroke="#4caf50">)</tspan><tspan x="1643" fill="#5c6bc0" stroke="#5c6bc0">{</tspan></text>
<text class="m" y="1130" stroke-width="0.8" stroke-linejoin="round" xml:space="preserve"><tspan x="459" fill="#bbbbbb" stroke="#bbbbbb">results</tspan><tspan x="571" fill="#abb2bf" stroke="#abb2bf">.</tspan><tspan x="587" fill="#61afef" stroke="#61afef">add</tspan><tspan x="635" fill="#2196f3" stroke="#2196f3">(</tspan><tspan x="651" fill="#bbbbbb" stroke="#bbbbbb">option</tspan><tspan x="747" fill="#2196f3" stroke="#2196f3">)</tspan><tspan x="763" fill="#abb2bf" stroke="#abb2bf">;</tspan></text>
<text class="m" y="1172" stroke-width="0.8" stroke-linejoin="round" xml:space="preserve"><tspan x="395" fill="#5c6bc0" stroke="#5c6bc0">}</tspan></text>
<text class="m" y="1214" stroke-width="0.8" stroke-linejoin="round" xml:space="preserve"><tspan x="331" fill="#2196f3" stroke="#2196f3">}</tspan></text>
<text class="m" y="1256" stroke-width="0.8" stroke-linejoin="round" xml:space="preserve"><tspan x="331" fill="#d55fde" stroke="#d55fde" font-style="italic">return</tspan><tspan x="443" fill="#bbbbbb" stroke="#bbbbbb">results</tspan><tspan x="555" fill="#abb2bf" stroke="#abb2bf">.</tspan><tspan x="571" fill="#61afef" stroke="#61afef">toArray</tspan><tspan x="683" fill="#e6b422" stroke="#e6b422">(</tspan><tspan x="699" fill="#d55fde" stroke="#d55fde" font-style="italic">new</tspan><tspan x="763" fill="#e5c07b" stroke="#e5c07b">String</tspan><tspan x="859" fill="#e6b422" stroke="#e6b422">[</tspan><tspan x="875" fill="#d19a66" stroke="#d19a66">0</tspan><tspan x="891" fill="#e6b422" stroke="#e6b422">]</tspan><tspan x="907" fill="#e6b422" stroke="#e6b422">)</tspan><tspan x="923" fill="#abb2bf" stroke="#abb2bf">;</tspan></text>
<text class="m" y="1298" stroke-width="0.8" stroke-linejoin="round" xml:space="preserve"><tspan x="267" fill="#4caf50" stroke="#4caf50">}</tspan></text>
</g>
<g clip-path="url(#edclip)">
<text class="m" y="122" fill="#4b5263" stroke="#4b5263" stroke-width="0.5" text-anchor="end" style="font-size:24px;letter-spacing:0px"><tspan x="93.5">87</tspan></text>
<text class="m" y="164" fill="#4b5263" stroke="#4b5263" stroke-width="0.5" text-anchor="end" style="font-size:24px;letter-spacing:0px"><tspan x="93.5">88</tspan></text>
<text class="m" y="206" fill="#4b5263" stroke="#4b5263" stroke-width="0.5" text-anchor="end" style="font-size:24px;letter-spacing:0px"><tspan x="93.5">89</tspan></text>
<text class="m" y="248" fill="#4b5263" stroke="#4b5263" stroke-width="0.5" text-anchor="end" style="font-size:24px;letter-spacing:0px"><tspan x="93.5">90</tspan></text>
<text class="m" y="290" fill="#4b5263" stroke="#4b5263" stroke-width="0.5" text-anchor="end" style="font-size:24px;letter-spacing:0px"><tspan x="93.5">91</tspan></text>
<text class="m" y="332" fill="#4b5263" stroke="#4b5263" stroke-width="0.5" text-anchor="end" style="font-size:24px;letter-spacing:0px"><tspan x="93.5">92</tspan></text>
<text class="m" y="374" fill="#4b5263" stroke="#4b5263" stroke-width="0.5" text-anchor="end" style="font-size:24px;letter-spacing:0px"><tspan x="93.5">93</tspan></text>
<text class="m" y="416" fill="#4b5263" stroke="#4b5263" stroke-width="0.5" text-anchor="end" style="font-size:24px;letter-spacing:0px"><tspan x="93.5">94</tspan></text>
<text class="m" y="458" fill="#9aa0ac" stroke="#9aa0ac" stroke-width="0.5" text-anchor="end" style="font-size:24px;letter-spacing:0px"><tspan x="93.5">95</tspan></text>
<text class="m" y="500" fill="#4b5263" stroke="#4b5263" stroke-width="0.5" text-anchor="end" style="font-size:24px;letter-spacing:0px"><tspan x="93.5">96</tspan></text>
<text class="m" y="542" fill="#4b5263" stroke="#4b5263" stroke-width="0.5" text-anchor="end" style="font-size:24px;letter-spacing:0px"><tspan x="93.5">97</tspan></text>
<text class="m" y="584" fill="#4b5263" stroke="#4b5263" stroke-width="0.5" text-anchor="end" style="font-size:24px;letter-spacing:0px"><tspan x="93.5">98</tspan></text>
<text class="m" y="626" fill="#4b5263" stroke="#4b5263" stroke-width="0.5" text-anchor="end" style="font-size:24px;letter-spacing:0px"><tspan x="93.5">99</tspan></text>
<text class="m" y="668" fill="#4b5263" stroke="#4b5263" stroke-width="0.5" text-anchor="end" style="font-size:24px;letter-spacing:0px"><tspan x="93.5">100</tspan></text>
<text class="m" y="710" fill="#4b5263" stroke="#4b5263" stroke-width="0.5" text-anchor="end" style="font-size:24px;letter-spacing:0px"><tspan x="93.5">101</tspan></text>
<text class="m" y="752" fill="#4b5263" stroke="#4b5263" stroke-width="0.5" text-anchor="end" style="font-size:24px;letter-spacing:0px"><tspan x="93.5">102</tspan></text>
<text class="m" y="794" fill="#4b5263" stroke="#4b5263" stroke-width="0.5" text-anchor="end" style="font-size:24px;letter-spacing:0px"><tspan x="93.5">103</tspan></text>
<text class="m" y="836" fill="#4b5263" stroke="#4b5263" stroke-width="0.5" text-anchor="end" style="font-size:24px;letter-spacing:0px"><tspan x="93.5">104</tspan></text>
<text class="m" y="878" fill="#4b5263" stroke="#4b5263" stroke-width="0.5" text-anchor="end" style="font-size:24px;letter-spacing:0px"><tspan x="93.5">105</tspan></text>
<text class="m" y="920" fill="#4b5263" stroke="#4b5263" stroke-width="0.5" text-anchor="end" style="font-size:24px;letter-spacing:0px"><tspan x="93.5">106</tspan></text>
<text class="m" y="962" fill="#4b5263" stroke="#4b5263" stroke-width="0.5" text-anchor="end" style="font-size:24px;letter-spacing:0px"><tspan x="93.5">107</tspan></text>
<text class="m" y="1004" fill="#4b5263" stroke="#4b5263" stroke-width="0.5" text-anchor="end" style="font-size:24px;letter-spacing:0px"><tspan x="93.5">108</tspan></text>
<text class="m" y="1046" fill="#4b5263" stroke="#4b5263" stroke-width="0.5" text-anchor="end" style="font-size:24px;letter-spacing:0px"><tspan x="93.5">109</tspan></text>
<text class="m" y="1088" fill="#4b5263" stroke="#4b5263" stroke-width="0.5" text-anchor="end" style="font-size:24px;letter-spacing:0px"><tspan x="93.5">110</tspan></text>
<text class="m" y="1130" fill="#4b5263" stroke="#4b5263" stroke-width="0.5" text-anchor="end" style="font-size:24px;letter-spacing:0px"><tspan x="93.5">111</tspan></text>
<text class="m" y="1172" fill="#4b5263" stroke="#4b5263" stroke-width="0.5" text-anchor="end" style="font-size:24px;letter-spacing:0px"><tspan x="93.5">112</tspan></text>
<text class="m" y="1214" fill="#4b5263" stroke="#4b5263" stroke-width="0.5" text-anchor="end" style="font-size:24px;letter-spacing:0px"><tspan x="93.5">113</tspan></text>
<text class="m" y="1256" fill="#4b5263" stroke="#4b5263" stroke-width="0.5" text-anchor="end" style="font-size:24px;letter-spacing:0px"><tspan x="93.5">114</tspan></text>
<text class="m" y="1298" fill="#4b5263" stroke="#4b5263" stroke-width="0.5" text-anchor="end" style="font-size:24px;letter-spacing:0px"><tspan x="93.5">115</tspan></text>
</g>
<rect x="191" y="112" width="2" height="1204" fill="#5a5f6b"/>
<g clip-path="url(#edclip)">
<path d="M184 124 H200 V110 L192 101 L184 110 Z" fill="#282c34" stroke="#5a5f6b" stroke-width="2"/>
<line x1="188" y1="116" x2="196" y2="116" stroke="#5a5f6b" stroke-width="2"/>
<path d="M184 147 H200 V161 L192 170 L184 161 Z" fill="#282c34" stroke="#5a5f6b" stroke-width="2"/>
<line x1="188" y1="156" x2="196" y2="156" stroke="#5a5f6b" stroke-width="2"/>
<path d="M184 441 H200 V455 L192 464 L184 455 Z" fill="#2c313c" stroke="#5a5f6b" stroke-width="2"/>
<line x1="188" y1="450" x2="196" y2="450" stroke="#5a5f6b" stroke-width="2"/>
<path d="M184 567 H200 V581 L192 590 L184 581 Z" fill="#282c34" stroke="#5a5f6b" stroke-width="2"/>
<line x1="188" y1="576" x2="196" y2="576" stroke="#5a5f6b" stroke-width="2"/>
<path d="M184 819 H200 V833 L192 842 L184 833 Z" fill="#282c34" stroke="#5a5f6b" stroke-width="2"/>
<line x1="188" y1="828" x2="196" y2="828" stroke="#5a5f6b" stroke-width="2"/>
<path d="M184 861 H200 V875 L192 884 L184 875 Z" fill="#282c34" stroke="#5a5f6b" stroke-width="2"/>
<line x1="188" y1="870" x2="196" y2="870" stroke="#5a5f6b" stroke-width="2"/>
<path d="M184 1029 H200 V1043 L192 1052 L184 1043 Z" fill="#282c34" stroke="#5a5f6b" stroke-width="2"/>
<line x1="188" y1="1038" x2="196" y2="1038" stroke="#5a5f6b" stroke-width="2"/>
<path d="M184 1071 H200 V1085 L192 1094 L184 1085 Z" fill="#282c34" stroke="#5a5f6b" stroke-width="2"/>
<line x1="188" y1="1080" x2="196" y2="1080" stroke="#5a5f6b" stroke-width="2"/>
<path d="M184 544 H200 V530 L192 521 L184 530 Z" fill="#282c34" stroke="#5a5f6b" stroke-width="2"/>
<line x1="188" y1="536" x2="196" y2="536" stroke="#5a5f6b" stroke-width="2"/>
<path d="M184 670 H200 V656 L192 647 L184 656 Z" fill="#282c34" stroke="#5a5f6b" stroke-width="2"/>
<line x1="188" y1="662" x2="196" y2="662" stroke="#5a5f6b" stroke-width="2"/>
<path d="M184 754 H200 V740 L192 731 L184 740 Z" fill="#282c34" stroke="#5a5f6b" stroke-width="2"/>
<line x1="188" y1="746" x2="196" y2="746" stroke="#5a5f6b" stroke-width="2"/>
<path d="M184 964 H200 V950 L192 941 L184 950 Z" fill="#282c34" stroke="#5a5f6b" stroke-width="2"/>
<line x1="188" y1="956" x2="196" y2="956" stroke="#5a5f6b" stroke-width="2"/>
<path d="M184 1174 H200 V1160 L192 1151 L184 1160 Z" fill="#282c34" stroke="#5a5f6b" stroke-width="2"/>
<line x1="188" y1="1166" x2="196" y2="1166" stroke="#5a5f6b" stroke-width="2"/>
<path d="M184 1216 H200 V1202 L192 1193 L184 1202 Z" fill="#282c34" stroke="#5a5f6b" stroke-width="2"/>
<line x1="188" y1="1208" x2="196" y2="1208" stroke="#5a5f6b" stroke-width="2"/>
<path d="M184 1300 H200 V1286 L192 1277 L184 1286 Z" fill="#282c34" stroke="#5a5f6b" stroke-width="2"/>
<line x1="188" y1="1292" x2="196" y2="1292" stroke="#5a5f6b" stroke-width="2"/>
</g>
<text class="u" x="139.5" y="162" font-size="24" fill="#c8ccd4" stroke="#c8ccd4" stroke-width="0.35">@</text>
<circle cx="150" cy="197" r="11" fill="#db5c5c"/>
<path d="M147 188 l4 4 l8 -9" fill="none" stroke="#d6d6d6" stroke-width="3" stroke-linecap="butt" fill="none"/>
<rect x="42" y="1316" width="3500" height="56" fill="#323844"/>
<text class="u" x="52.83" y="1353.3" font-size="26.5" fill="#b4bac6" stroke="#b4bac6" stroke-width="0.35" textLength="92.9" lengthAdjust="spacing">Debug:</text>
<rect x="190" y="1330" width="21" height="17" fill="none" stroke="#7f838a" stroke-width="2"/>
<rect x="185" y="1335" width="21" height="18" fill="#3b8ba5" stroke="#9da0a6" stroke-width="2"/>
<rect x="188" y="1339" width="15" height="11" fill="#2f6f86"/>
<circle cx="209.5" cy="1356.5" r="4.5" fill="#10e010" stroke="#21252b" stroke-width="1.5"/>
<text class="u" x="223.14" y="1353.3" font-size="25.0" fill="#c8ccd4" stroke="#c8ccd4" stroke-width="0.35" textLength="49.8" lengthAdjust="spacing">Test</text>
<path d="M289.5 1339 l14 14 M303.5 1339 l-14 14" fill="none" stroke="#6c717b" stroke-width="1.8"/>
<rect x="158" y="1366" width="168" height="6" fill="#4a72c8"/>
<rect x="3460.50" y="1331.00" width="6.60" height="6.00" rx="0.8" fill="#afb1b3" transform="rotate(0 3463.8 1344)"/>
<rect x="3460.50" y="1331.00" width="6.60" height="6.00" rx="0.8" fill="#afb1b3" transform="rotate(60 3463.8 1344)"/>
<rect x="3460.50" y="1331.00" width="6.60" height="6.00" rx="0.8" fill="#afb1b3" transform="rotate(120 3463.8 1344)"/>
<rect x="3460.50" y="1331.00" width="6.60" height="6.00" rx="0.8" fill="#afb1b3" transform="rotate(180 3463.8 1344)"/>
<rect x="3460.50" y="1331.00" width="6.60" height="6.00" rx="0.8" fill="#afb1b3" transform="rotate(240 3463.8 1344)"/>
<rect x="3460.50" y="1331.00" width="6.60" height="6.00" rx="0.8" fill="#afb1b3" transform="rotate(300 3463.8 1344)"/>
<circle cx="3463.8" cy="1344" r="9.6" fill="#afb1b3"/>
<circle cx="3463.8" cy="1344" r="4.4" fill="#323844"/>
<rect x="3504" y="1342" width="24" height="4.2" fill="#afb1b3"/>
<rect x="98" y="1372" width="2" height="784" fill="#2c313a"/>
<path d="M74.5 1395.5 a8.6 8.6 0 1 0 1.8 9" fill="none" stroke="#499c54" stroke-width="4.2"/>
<path d="M73 1385.5 L85.5 1393.5 L73 1402.5 Z" fill="#499c54"/>
<rect x="72" y="1404" width="10" height="10" fill="#c4c4c4"/>
<rect x="50" y="1432.5" width="40" height="2" fill="#2f343e"/>
<rect x="60" y="1454" width="6" height="22" fill="#499c54"/>
<path d="M70 1454 L84 1465 L70 1476 Z" fill="#499c54"/>
<rect x="62" y="1506" width="6" height="22" fill="#5e6060"/>
<rect x="72" y="1506" width="6" height="22" fill="#5e6060"/>
<rect x="60" y="1560" width="20" height="20" fill="#c75450"/>
<rect x="50" y="1601.5" width="40" height="2" fill="#2f343e"/>
<circle cx="76.5" cy="1630.5" r="8.2" fill="#c9524f"/>
<circle cx="67.7" cy="1639" r="10" fill="#c9524f" stroke="#21252b" stroke-width="2.5"/>
<circle cx="70" cy="1688" r="10" fill="#c9524f"/>
<path d="M59 1699 L82 1677" fill="none" stroke="#21252b" stroke-width="6"/>
<path d="M59 1699 L82 1677" fill="none" stroke="#c4c4c4" stroke-width="2.5"/>
<rect x="50" y="1720" width="40" height="2" fill="#2f343e"/>
<path d="M56 1747 h7 l2.5 -5 h9 l2.5 5 h7 v18.5 h-28 z" fill="#afb1b3"/>
<circle cx="70" cy="1755.5" r="6.2" fill="#21252b"/>
<circle cx="70" cy="1755.5" r="3" fill="#afb1b3"/>
<rect x="50" y="1785.4" width="40" height="2" fill="#2f343e"/>
<rect x="65.83" y="1806.50" width="6.35" height="5.77" rx="0.8" fill="#afb1b3" transform="rotate(0 69 1819)"/>
<rect x="65.83" y="1806.50" width="6.35" height="5.77" rx="0.8" fill="#afb1b3" transform="rotate(60 69 1819)"/>
<rect x="65.83" y="1806.50" width="6.35" height="5.77" rx="0.8" fill="#afb1b3" transform="rotate(120 69 1819)"/>
<rect x="65.83" y="1806.50" width="6.35" height="5.77" rx="0.8" fill="#afb1b3" transform="rotate(180 69 1819)"/>
<rect x="65.83" y="1806.50" width="6.35" height="5.77" rx="0.8" fill="#afb1b3" transform="rotate(240 69 1819)"/>
<rect x="65.83" y="1806.50" width="6.35" height="5.77" rx="0.8" fill="#afb1b3" transform="rotate(300 69 1819)"/>
<circle cx="69" cy="1819" r="9.23" fill="#afb1b3"/>
<circle cx="69" cy="1819" r="4.23" fill="#21252b"/>
<path d="M77.5 1828.5 h9 l-4.5 4.5 z" fill="#d0d0d0"/>
<rect x="50" y="1852" width="40" height="2" fill="#2f343e"/>
<path d="M73 1872 l11.5 11.5 l-4.5 1.2 l-5.5 5.5 l0.2 6.5 l-6 -6 l-12.7 10 l10 -12.7 l-6 -6 l6.5 0.2 l5.5 -5.5 z" fill="#afb1b3"/>
<text class="u" x="125.16" y="1407.9" font-size="22.39" fill="#b4bac6" stroke="#b4bac6" stroke-width="0.35" textLength="100.8" lengthAdjust="spacing">Debugger</text>
<rect x="100" y="1424" width="154" height="4" fill="#4a72c8"/>
<rect x="254" y="1426" width="3288" height="2" fill="#2f343e"/>
<rect x="280" y="1390.5" width="24" height="19.5" fill="#c4c4c4"/>
<path d="M287 1394 l6 6 l-6 6" fill="none" stroke="#21252b" stroke-width="3"/>
<text class="u" x="315.47" y="1407.9" font-size="22.21" fill="#b4bac6" stroke="#b4bac6" stroke-width="0.35" textLength="83.5" lengthAdjust="spacing">Console</text>
<rect x="430" y="1388" width="24" height="4" fill="#afb1b3"/>
<rect x="430" y="1397" width="24" height="5" fill="#3592c4"/>
<rect x="430" y="1406" width="24" height="4" fill="#afb1b3"/>
<rect x="474" y="1378" width="2" height="40" fill="#33383f"/>
<path d="M496.5 1398.5 l9.5 -9.5 l9 9" fill="none" stroke="#3592c4" stroke-width="4.6"/>
<path d="M509 1401.5 h11.5 v-11.5 z" fill="#3592c4"/>
<rect x="496" y="1406" width="24" height="4" fill="#afb1b3"/>
<path d="M560 1384 v12" fill="none" stroke="#3592c4" stroke-width="4.2"/>
<path d="M550.5 1393 h19 l-9.5 9.5 z" fill="#3592c4"/>
<rect x="548" y="1406" width="24" height="4" fill="#afb1b3"/>
<path d="M612 1384 v12" fill="none" stroke="#c9524f" stroke-width="4.2"/>
<path d="M602.5 1393 h19 l-9.5 9.5 z" fill="#c9524f"/>
<rect x="600" y="1406" width="24" height="4" fill="#afb1b3"/>
<path d="M664 1404 v-12" fill="none" stroke="#3592c4" stroke-width="4.2"/>
<path d="M654.5 1394.5 h19 l-9.5 -9.5 z" fill="#3592c4"/>
<rect x="652" y="1406" width="24" height="4" fill="#afb1b3"/>
<path d="M704.5 1386.5 l11.5 11.5 M716 1386.5 l-11.5 11.5" fill="none" stroke="#c9524f" stroke-width="4"/>
<path d="M712.6 1400 v8.2 h13.6 v-14.2 h-6" fill="none" stroke="#afb1b3" stroke-width="4"/>
<path d="M721 1388.5 v9 l-5.5 -4.5 z" fill="#afb1b3"/>
<path d="M756 1387 l11 11" fill="none" stroke="#3592c4" stroke-width="4.4"/>
<path d="M771 1388.5 v13.5 h-13.5 z" fill="#3592c4"/>
<path d="M772 1397 h10 M777 1397 v14 M772 1411 h10" fill="none" stroke="#afb1b3" stroke-width="1.8"/>
<rect x="800" y="1378" width="2" height="40" fill="#33383f"/>
<rect x="822" y="1386" width="24" height="24" fill="#afb1b3"/>
<rect x="825.5" y="1390" width="17" height="4" fill="#21252b"/>
<rect x="825.5" y="1397.5" width="4.6" height="3.6" fill="#21252b"/>
<rect x="825.5" y="1403.1" width="4.6" height="3.6" fill="#21252b"/>
<rect x="831.7" y="1397.5" width="4.6" height="3.6" fill="#21252b"/>
<rect x="831.7" y="1403.1" width="4.6" height="3.6" fill="#21252b"/>
<rect x="837.9" y="1397.5" width="4.6" height="3.6" fill="#21252b"/>
<rect x="837.9" y="1403.1" width="4.6" height="3.6" fill="#21252b"/>
<path d="M874 1390 h11 M890 1390 h8 M874 1399 h7 M886 1399 h12 M874 1408 h7 M885 1408 h13" fill="none" stroke="#4e5254" stroke-width="3.4"/>
<path d="M881 1410 l8 -22" fill="none" stroke="#4e5254" stroke-width="2.6"/>
<rect x="3502" y="1388" width="14" height="10" fill="#afb1b3"/>
<rect x="3518" y="1388" width="8" height="10" fill="#afb1b3"/>
<rect x="3502" y="1400" width="24" height="8" fill="#afb1b3"/>
<path d="M3520 1410.2 h12 l-6 5.8 z" fill="#d8d8d8"/>
<text class="u" x="125.2" y="1461.7" font-size="22.0" fill="#b4bac6" stroke="#b4bac6" stroke-width="0.35" textLength="75.2" lengthAdjust="spacing">Frames</text>
<text class="u" x="252.51" y="1461.7" font-size="22.0" fill="#b4bac6" stroke="#b4bac6" stroke-width="0.35" textLength="81.8" lengthAdjust="spacing">Threads</text>
<rect x="100" y="1478" width="128" height="4" fill="#4a72c8"/>
<rect x="228" y="1480" width="1190" height="2" fill="#2f343e"/>
<rect x="1418" y="1428" width="2" height="728" fill="#2c313a"/>
<rect x="106" y="1488" width="1142" height="48" fill="#323844" rx="6"/>
<path d="M123 1510 l9 9 l16 -18" fill="none" stroke="#c75d2a" stroke-width="5"/>
<text class="u" x="158.86" y="1522" font-size="26.8" fill="#b4bac6" stroke="#b4bac6" stroke-width="0.35" textLength="459.5" lengthAdjust="spacing">"main"@1 in group "main": RUNNING</text>
<path d="M1216 1507 h18 l-9 9 z" fill="#afb1b3"/>
<path d="M1284 1524 v-21 M1275.5 1511.5 l8.5 -8.5 l8.5 8.5" fill="none" stroke="#5c5c5c" stroke-width="4.2"/>
<path d="M1336 1500 v21 M1327.5 1512.5 l8.5 8.5 l8.5 -8.5" fill="none" stroke="#c4c4c4" stroke-width="4.2"/>
<path d="M1375.5 1500 h24.5 l-9.5 11.5 v12.5 h-5.5 v-12.5 z" fill="#c4c4c4"/>
<rect x="100" y="1543" width="1318" height="2" fill="#2f343e"/>
<rect x="100" y="1546" width="1318" height="40" fill="#323844"/>
<rect x="100" y="1586" width="1318" height="570" fill="#3e2f28"/>
<text class="u" x="131.21" y="1575.5" font-size="27.0" fill="#e4e7ec" stroke="#e4e7ec" stroke-width="0.35" textLength="540.2" lengthAdjust="spacing">newInstance:95, MessagePatternConverter</text>
<text class="u" x="679.53" y="1575.5" font-size="27.0" fill="#d4d7dc" stroke="#d4d7dc" stroke-width="0.35" textLength="494.8" lengthAdjust="spacing" style="font-style:italic">(org.apache.logging.log4j.core.pattern)</text>
<text class="u" x="131.19" y="1615.5" font-size="27.0" fill="#5c677b" stroke="#5c677b" stroke-width="0.35" textLength="491.4" lengthAdjust="spacing">invoke0:-1, NativeMethodAccessorImpl</text>
<text class="u" x="629.43" y="1615.5" font-size="27.0" fill="#7d7f83" stroke="#7d7f83" stroke-width="0.35" textLength="154.7" lengthAdjust="spacing" style="font-style:italic">(sun.reflect)</text>
<text class="u" x="131.19" y="1655.5" font-size="27.0" fill="#5c677b" stroke="#5c677b" stroke-width="0.35" textLength="482.0" lengthAdjust="spacing">invoke:62, NativeMethodAccessorImpl</text>
<text class="u" x="620.53" y="1655.5" font-size="27.0" fill="#7d7f83" stroke="#7d7f83" stroke-width="0.35" textLength="154.6" lengthAdjust="spacing" style="font-style:italic">(sun.reflect)</text>
<text class="u" x="131.19" y="1695.5" font-size="27.0" fill="#5c677b" stroke="#5c677b" stroke-width="0.35" textLength="537.6" lengthAdjust="spacing">invoke:43, DelegatingMethodAccessorImpl</text>
<text class="u" x="676.53" y="1695.5" font-size="27.0" fill="#7d7f83" stroke="#7d7f83" stroke-width="0.35" textLength="154.1" lengthAdjust="spacing" style="font-style:italic">(sun.reflect)</text>
<text class="u" x="131.19" y="1735.5" font-size="27.0" fill="#5c677b" stroke="#5c677b" stroke-width="0.35" textLength="251.4" lengthAdjust="spacing">invoke:498, Method</text>
<text class="u" x="390.43" y="1735.5" font-size="27.0" fill="#7d7f83" stroke="#7d7f83" stroke-width="0.35" textLength="221.2" lengthAdjust="spacing" style="font-style:italic">(java.lang.reflect)</text>
<text class="u" x="131.85" y="1775.5" font-size="27.0" fill="#5c677b" stroke="#5c677b" stroke-width="0.35" textLength="447.6" lengthAdjust="spacing">createConverter:590, PatternParser</text>
<text class="u" x="587.73" y="1775.5" font-size="27.0" fill="#7d7f83" stroke="#7d7f83" stroke-width="0.35" textLength="494.9" lengthAdjust="spacing" style="font-style:italic">(org.apache.logging.log4j.core.pattern)</text>
<text class="u" x="132.62" y="1815.5" font-size="27.0" fill="#5c677b" stroke="#5c677b" stroke-width="0.35" textLength="455.4" lengthAdjust="spacing">finalizeConverter:657, PatternParser</text>
<text class="u" x="596.23" y="1815.5" font-size="27.0" fill="#7d7f83" stroke="#7d7f83" stroke-width="0.35" textLength="494.8" lengthAdjust="spacing" style="font-style:italic">(org.apache.logging.log4j.core.pattern)</text>
<text class="u" x="131.26" y="1855.5" font-size="27.0" fill="#5c677b" stroke="#5c677b" stroke-width="0.35" textLength="314.0" lengthAdjust="spacing">parse:420, PatternParser</text>
<text class="u" x="453.73" y="1855.5" font-size="27.0" fill="#7d7f83" stroke="#7d7f83" stroke-width="0.35" textLength="494.9" lengthAdjust="spacing" style="font-style:italic">(org.apache.logging.log4j.core.pattern)</text>
<text class="u" x="131.27" y="1895.5" font-size="26.78" fill="#5c677b" stroke="#5c677b" stroke-width="0.35" textLength="307.0" lengthAdjust="spacing">parse:177, PatternParser</text>
<text class="u" x="447.43" y="1895.5" font-size="27.0" fill="#7d7f83" stroke="#7d7f83" stroke-width="0.35" textLength="493.8" lengthAdjust="spacing" style="font-style:italic">(org.apache.logging.log4j.core.pattern)</text>
<text class="u" x="131.26" y="1935.5" font-size="27.0" fill="#5c677b" stroke="#5c677b" stroke-width="0.35" textLength="529.7" lengthAdjust="spacing">build:474, PatternLayout$SerializerBuilder</text>
<text class="u" x="669.13" y="1935.5" font-size="27.0" fill="#7d7f83" stroke="#7d7f83" stroke-width="0.35" textLength="480.5" lengthAdjust="spacing" style="font-style:italic">(org.apache.logging.log4j.core.layout)</text>
<text class="u" x="131.67" y="1975.5" font-size="27.0" fill="#5c677b" stroke="#5c677b" stroke-width="0.35" textLength="316.3" lengthAdjust="spacing">&lt;init&gt;:140, PatternLayout</text>
<text class="u" x="456.43" y="1975.5" font-size="27.0" fill="#7d7f83" stroke="#7d7f83" stroke-width="0.35" textLength="479.9" lengthAdjust="spacing" style="font-style:italic">(org.apache.logging.log4j.core.layout)</text>
<text class="u" x="131.67" y="2015.5" font-size="27.0" fill="#5c677b" stroke="#5c677b" stroke-width="0.35" textLength="298.9" lengthAdjust="spacing">&lt;init&gt;:61, PatternLayout</text>
<text class="u" x="438.73" y="2015.5" font-size="27.0" fill="#7d7f83" stroke="#7d7f83" stroke-width="0.35" textLength="479.9" lengthAdjust="spacing" style="font-style:italic">(org.apache.logging.log4j.core.layout)</text>
<text class="u" x="131.26" y="2055.5" font-size="27.0" fill="#5c677b" stroke="#5c677b" stroke-width="0.35" textLength="411.2" lengthAdjust="spacing">build:770, PatternLayout$Builder</text>
<text class="u" x="550.73" y="2055.5" font-size="27.0" fill="#7d7f83" stroke="#7d7f83" stroke-width="0.35" textLength="480.9" lengthAdjust="spacing" style="font-style:italic">(org.apache.logging.log4j.core.layout)</text>
<text class="u" x="132.25" y="2095.5" font-size="27.0" fill="#5c677b" stroke="#5c677b" stroke-width="0.35" textLength="505.2" lengthAdjust="spacing">setToDefault:715, AbstractConfiguration</text>
<text class="u" x="644.33" y="2095.5" font-size="27.0" fill="#7d7f83" stroke="#7d7f83" stroke-width="0.35" textLength="480.3" lengthAdjust="spacing" style="font-style:italic">(org.apache.logging.log4j.core.config)</text>
<text class="u" x="131.67" y="2135.5" font-size="27.0" fill="#5c677b" stroke="#5c677b" stroke-width="0.35" textLength="387.1" lengthAdjust="spacing">&lt;init&gt;:47, DefaultConfiguration</text>
<text class="u" x="525.73" y="2135.5" font-size="27.0" fill="#7d7f83" stroke="#7d7f83" stroke-width="0.35" textLength="482.5" lengthAdjust="spacing" style="font-style:italic">(org.apache.logging.log4j.core.config)</text>
<text class="u" x="1446.9" y="1462" font-size="22.0" fill="#b4bac6" stroke="#b4bac6" stroke-width="0.35" textLength="91.5" lengthAdjust="spacing">Variables</text>
<rect x="1420" y="1480" width="2122" height="2" fill="#2f343e"/>
<rect x="1468" y="1482" width="2" height="674" fill="#2c313a"/>
<path d="M1434 1508 h20 M1444 1498 v20" fill="none" stroke="#d0d0d0" stroke-width="3.5"/>
<rect x="1434" y="1558.5" width="20" height="3" fill="#5c5c5c"/>
<path d="M1432 1618 h24 l-12 -11 z" fill="#5c5c5c"/>
<path d="M1432 1658 h24 l-12 11 z" fill="#5c5c5c"/>
<rect x="1433" y="1703" width="16" height="18" fill="#5c5c5c"/>
<rect x="1439" y="1709" width="16" height="18" fill="#5c5c5c" stroke="#21252b" stroke-width="2"/>
<path d="M1442 1714 h10 M1442 1718 h10 M1442 1722 h10" fill="none" stroke="#21252b" stroke-width="1.5"/>
<rect x="1422" y="1746" width="44" height="44" fill="#333945" rx="7"/>
<ellipse cx="1436" cy="1769.5" rx="6.3" ry="5.8" fill="none" stroke="#c4c4c4" stroke-width="3.4"/><ellipse cx="1452" cy="1769.5" rx="6.3" ry="5.8" fill="none" stroke="#c4c4c4" stroke-width="3.4"/>
<path d="M1428.5 1765 l2 -2.5 M1459.5 1765 l-2 -2.5" fill="none" stroke="#c4c4c4" stroke-width="2.5"/>
<path d="M1488 1496.5 l8.5 8 l-8.5 8" fill="none" stroke="#afb1b3" stroke-width="2.4"/>
<circle cx="1534" cy="1504.5" r="14" fill="#a67b33"/>
<text class="u" x="1534" y="1510.5" font-size="21" fill="#4a3410" stroke="#4a3410" stroke-width="0.35" text-anchor="middle">s</text>
<text class="u" x="1556.25" y="1513.7" font-size="27.0" fill="#c5cad3" stroke="#c5cad3" stroke-width="0.35" textLength="67.5" lengthAdjust="spacing">static</text>
<text class="u" x="1631.21" y="1513.7" font-size="27.0" fill="#8c8c8c" stroke="#8c8c8c" stroke-width="0.35" textLength="481.2" lengthAdjust="spacing">members of MessagePatternConverter</text>
<path d="M1488 1536.5 l8.5 8 l-8.5 8" fill="none" stroke="#afb1b3" stroke-width="2.4"/>
<circle cx="1534" cy="1544.5" r="14" fill="#a67b33"/>
<text class="u" x="1534" y="1550.5" font-size="21" fill="#4a3410" stroke="#4a3410" stroke-width="0.35" text-anchor="middle">p</text>
<text class="u" x="1555.85" y="1553.7" font-size="27.0" fill="#f3848a" stroke="#f3848a" stroke-width="0.35" textLength="78.9" lengthAdjust="spacing">config</text>
<text class="u" x="1643" y="1553.7" font-size="26" fill="#b4b4b4" stroke="#b4b4b4" stroke-width="0.35">=</text>
<text class="u" x="1666.85" y="1553.7" font-size="27.0" fill="#8c8c8c" stroke="#8c8c8c" stroke-width="0.35" textLength="361.6" lengthAdjust="spacing">{DefaultConfiguration@1232}</text>
<circle cx="1534" cy="1584.5" r="14" fill="#a67b33"/>
<text class="u" x="1534" y="1590.5" font-size="21" fill="#4a3410" stroke="#4a3410" stroke-width="0.35" text-anchor="middle">p</text>
<text class="u" x="1555.87" y="1593.7" font-size="27.0" fill="#f3848a" stroke="#f3848a" stroke-width="0.35" textLength="92.6" lengthAdjust="spacing">options</text>
<text class="u" x="1657" y="1593.7" font-size="26" fill="#b4b4b4" stroke="#b4b4b4" stroke-width="0.35">=</text>
<text class="u" x="1680.95" y="1593.7" font-size="27.0" fill="#8c8c8c" stroke="#8c8c8c" stroke-width="0.35" textLength="214.2" lengthAdjust="spacing">{String[0]@1233}</text>
<rect x="1522" y="1612.5" width="24" height="24" fill="#3b8ba5"/>
<text class="u" x="1534" y="1630.5" font-size="17" fill="#16323d" stroke="#16323d" stroke-width="0.35" text-anchor="middle" style="font-weight:bold">01</text>
<text class="u" x="1555.18" y="1633.7" font-size="27.0" fill="#f3848a" stroke="#f3848a" stroke-width="0.35" textLength="98.2" lengthAdjust="spacing">lookups</text>
<text class="u" x="1662" y="1633.7" font-size="26" fill="#b4b4b4" stroke="#b4b4b4" stroke-width="0.35">=</text>
<text class="u" x="1685.62" y="1633.7" font-size="27.0" fill="#c5cad3" stroke="#c5cad3" stroke-width="0.35" textLength="59.0" lengthAdjust="spacing">false</text>
<rect x="1530" y="1653.0" width="16" height="6" fill="#3b9ab8"/>
<rect x="1530" y="1662.3" width="16" height="6" fill="#3b9ab8"/>
<rect x="1530" y="1671.6" width="16" height="6" fill="#3b9ab8"/>
<text class="u" x="1520" y="1657.5" font-size="10" fill="#c4c4c4" stroke="#c4c4c4" stroke-width="0.35">1</text>
<text class="u" x="1520" y="1667.0" font-size="10" fill="#c4c4c4" stroke="#c4c4c4" stroke-width="0.35">2</text>
<text class="u" x="1520" y="1676.5" font-size="10" fill="#c4c4c4" stroke="#c4c4c4" stroke-width="0.35">3</text>
<text class="u" x="1556.62" y="1673.7" font-size="27.0" fill="#f3848a" stroke="#f3848a" stroke-width="0.35" textLength="93.4" lengthAdjust="spacing">formats</text>
<text class="u" x="1659" y="1673.7" font-size="26" fill="#b4b4b4" stroke="#b4b4b4" stroke-width="0.35">=</text>
<text class="u" x="1682.95" y="1673.7" font-size="27.0" fill="#8c8c8c" stroke="#8c8c8c" stroke-width="0.35" textLength="214.2" lengthAdjust="spacing">{String[0]@1233}</text>
<rect x="1524" y="1693.5" width="20" height="5.6" fill="#a87d30"/>
<rect x="1524" y="1701.5" width="20" height="5.6" fill="#a87d30"/>
<rect x="1524" y="1709.5" width="20" height="5.6" fill="#a87d30"/>
<text class="u" x="1556.59" y="1713.7" font-size="26.91" fill="#f3848a" stroke="#f3848a" stroke-width="0.35" textLength="159.6" lengthAdjust="spacing">textRenderer</text>
<text class="u" x="1725.5" y="1713.7" font-size="26" fill="#b4b4b4" stroke="#b4b4b4" stroke-width="0.35">=</text>
<text class="u" x="1747.61" y="1713.7" font-size="27.0" fill="#c5cad3" stroke="#c5cad3" stroke-width="0.35" textLength="45.8" lengthAdjust="spacing">null</text>
<path d="M1488 1736.5 l8.5 8 l-8.5 8" fill="none" stroke="#afb1b3" stroke-width="2.4"/>
<rect x="1524" y="1733.5" width="20" height="5.6" fill="#a87d30"/>
<rect x="1524" y="1741.5" width="20" height="5.6" fill="#a87d30"/>
<rect x="1524" y="1749.5" width="20" height="5.6" fill="#a87d30"/>
<text class="u" x="1555.21" y="1753.7" font-size="27.0" fill="#f3848a" stroke="#f3848a" stroke-width="0.35" textLength="70.4" lengthAdjust="spacing">result</text>
<text class="u" x="1635" y="1753.7" font-size="26" fill="#b4b4b4" stroke="#b4b4b4" stroke-width="0.35">=</text>
<text class="u" x="1658.25" y="1753.7" font-size="26.97" fill="#8c8c8c" stroke="#8c8c8c" stroke-width="0.35" textLength="853.7" lengthAdjust="spacing">{MessagePatternConverter$SimpleMessagePatternConverter@1235}</text>
<rect x="3404" y="1428" width="2" height="728" fill="#2c313a"/>
<clipPath id="memclip"><rect x="3406" y="1430" width="80" height="50"/></clipPath>
<g clip-path="url(#memclip)">
<text class="u" x="3430.07" y="1462.4" font-size="23.47" fill="#b4bac6" stroke="#b4bac6" stroke-width="0.35" textLength="87.0" lengthAdjust="spacing">Memory</text>
</g>
<path d="M3505 1451 l9.5 9.5 l9.5 -9.5" fill="none" stroke="#c4c4c4" stroke-width="3"/>
<rect x="3406" y="1478" width="80" height="4" fill="#4a72c8"/>
<rect x="3413" y="1488.5" width="64" height="46" rx="5" fill="#1d2026" stroke="#33383f" stroke-width="1.5"/>
<circle cx="3438" cy="1509.5" r="8" fill="none" stroke="#afb1b3" stroke-width="2"/>
<path d="M3443.5 1515.5 l6 6" fill="none" stroke="#afb1b3" stroke-width="2.5"/>
<rect x="3507.83" y="1498.50" width="6.35" height="5.77" rx="0.8" fill="#afb1b3" transform="rotate(0 3511 1511)"/>
<rect x="3507.83" y="1498.50" width="6.35" height="5.77" rx="0.8" fill="#afb1b3" transform="rotate(60 3511 1511)"/>
<rect x="3507.83" y="1498.50" width="6.35" height="5.77" rx="0.8" fill="#afb1b3" transform="rotate(120 3511 1511)"/>
<rect x="3507.83" y="1498.50" width="6.35" height="5.77" rx="0.8" fill="#afb1b3" transform="rotate(180 3511 1511)"/>
<rect x="3507.83" y="1498.50" width="6.35" height="5.77" rx="0.8" fill="#afb1b3" transform="rotate(240 3511 1511)"/>
<rect x="3507.83" y="1498.50" width="6.35" height="5.77" rx="0.8" fill="#afb1b3" transform="rotate(300 3511 1511)"/>
<circle cx="3511" cy="1511" r="9.23" fill="#afb1b3"/>
<circle cx="3511" cy="1511" r="4.23" fill="#21252b"/>
<path d="M3519.5 1520.5 h9 l-4.5 4.5 z" fill="#d0d0d0"/>
<text class="u" x="3424" y="1575" font-size="22" fill="#b4bac6" stroke="#b4bac6" stroke-width="0.35">..</text>
<rect x="3434" y="1545" width="1.5" height="43" fill="#33383f"/>
<text class="u" x="3451.68" y="1575" font-size="22.12" fill="#b4bac6" stroke="#b4bac6" stroke-width="0.35" textLength="60.5" lengthAdjust="spacing">Count</text>
<rect x="3406" y="1590" width="136" height="2" fill="#2f343e"/>
<clipPath id="memclip2"><rect x="3406" y="1760" width="136" height="50"/></clipPath>
<g clip-path="url(#memclip2)">
<text class="u" x="3409.95" y="1795" font-size="26.0" fill="#6b727d" stroke="#6b727d" stroke-width="0.35" textLength="90.4" lengthAdjust="spacing">loaded.</text>
<text class="u" x="3510" y="1795" font-size="26" fill="#5c8ef0" stroke="#5c8ef0" stroke-width="0.35" style="letter-spacing:1.2px">Load</text>
</g>
<rect x="0" y="2156" width="3584" height="2" fill="#2c313a"/>
<rect x="0" y="2198" width="3584" height="2" fill="#2c313a"/>
<rect x="240" y="2158" width="168" height="40" fill="#3a3f4b"/>
<circle cx="75" cy="2178" r="10.5" fill="#afb1b3"/>
<rect x="73.5" y="2171.5" width="3" height="8" fill="#21252b"/>
<rect x="73.5" y="2182" width="3" height="3" fill="#21252b"/>
<text class="u" x="95.87" y="2186" font-size="22.2" fill="#b4bac6" stroke="#b4bac6" stroke-width="0.35" textLength="121.4" lengthAdjust="spacing">6: Problems</text>
<rect x="97" y="2189" width="12" height="1.5" fill="#b4bac6"/>
<path d="M269 2164.5 l4.5 5.5 M283 2164.5 l-4.5 5.5" fill="none" stroke="#afb1b3" stroke-width="3.2"/>
<path d="M268 2174 a8 7 0 0 1 16 0 v9 a8 9 0 0 1 -16 0 z" fill="#afb1b3"/>
<path d="M264 2175.5 h24 M264 2181.5 h24 M264 2187.5 h24" fill="none" stroke="#afb1b3" stroke-width="3"/>
<circle cx="284.4" cy="2188.5" r="4.5" fill="#10e010" stroke="#3a3f4b" stroke-width="1.5"/>
<text class="u" x="295.91" y="2186" font-size="22.32" fill="#b4bac6" stroke="#b4bac6" stroke-width="0.35" textLength="92.8" lengthAdjust="spacing">5: Debug</text>
<rect x="296.8" y="2189" width="12" height="1.5" fill="#b4bac6"/>
<rect x="432" y="2169" width="4" height="4" fill="#afb1b3"/>
<rect x="438" y="2169" width="14" height="4" fill="#afb1b3"/>
<rect x="432" y="2176" width="4" height="4" fill="#afb1b3"/>
<rect x="438" y="2176" width="14" height="4" fill="#afb1b3"/>
<rect x="432" y="2183" width="4" height="4" fill="#afb1b3"/>
<rect x="438" y="2183" width="14" height="4" fill="#afb1b3"/>
<text class="u" x="465" y="2186" font-size="21.5" fill="#b4bac6" stroke="#b4bac6" stroke-width="0.35">TODO</text>
<rect x="566" y="2167" width="22" height="20" fill="#afb1b3"/>
<path d="M570 2172 l5 4 l-5 4 M577 2181 h7" fill="none" stroke="#21252b" stroke-width="2"/>
<text class="u" x="598.01" y="2186" font-size="22.0" fill="#b4bac6" stroke="#b4bac6" stroke-width="0.35" textLength="86.8" lengthAdjust="spacing">Terminal</text>
<path d="M735 2165 h12 l6.5 11.5 l-6.5 11.5 h-12 l-6.5 -11.5 z" fill="#afb1b3"/>
<path d="M737.5 2170.5 l9 6 l-9 6 z" fill="#21252b"/>
<text class="u" x="761.04" y="2186" font-size="22.18" fill="#b4bac6" stroke="#b4bac6" stroke-width="0.35" textLength="112.5" lengthAdjust="spacing">8: Services</text>
<rect x="762" y="2189" width="12" height="1.5" fill="#b4bac6"/>
<path d="M914 2170 l6 -6 l8 3 l-3 3 l-4 -1 l-2 2 l13 13 l-4 4 l-13 -13 l-2 2 z" fill="#afb1b3"/>
<text class="u" x="946.09" y="2186" font-size="23.27" fill="#b4bac6" stroke="#b4bac6" stroke-width="0.35" textLength="53.1" lengthAdjust="spacing">Build</text>
<circle cx="3400.7" cy="2179" r="12.6" fill="#499c54"/>
<rect x="3400.7" y="2179" width="12.6" height="12.6" fill="#499c54"/>
<text class="u" x="3400.5" y="2186" font-size="19" fill="#ffffff" stroke="#ffffff" stroke-width="0.35" text-anchor="middle" style="font-weight:bold">1</text>
<text class="u" x="3421.19" y="2186" font-size="22.05" fill="#b4bac6" stroke="#b4bac6" stroke-width="0.35" textLength="101.7" lengthAdjust="spacing">Event Log</text>
<rect x="18" y="2209" width="17" height="17" fill="none" stroke="#afb1b3" stroke-width="2"/>
<path d="M13 2214 v17 h17" fill="none" stroke="#afb1b3" stroke-width="2"/>
<text class="u" x="63.16" y="2228" font-size="22.5" fill="#b4bac6" stroke="#b4bac6" stroke-width="0.35" textLength="379.6" lengthAdjust="spacing">All files are up-to-date (a minute ago)</text>
<text class="u" x="3213.97" y="2228" font-size="22.0" fill="#b4bac6" stroke="#b4bac6" stroke-width="0.35" textLength="43.8" lengthAdjust="spacing">95:1</text>
<text class="u" x="3282" y="2228" font-size="21.5" fill="#b4bac6" stroke="#b4bac6" stroke-width="0.35">LF</text>
<text class="u" x="3329.23" y="2228" font-size="22.98" fill="#b4bac6" stroke="#b4bac6" stroke-width="0.35" textLength="66.8" lengthAdjust="spacing">UTF-8</text>
<text class="u" x="3420.49" y="2228" font-size="22.26" fill="#b4bac6" stroke="#b4bac6" stroke-width="0.35" textLength="91.3" lengthAdjust="spacing">4 spaces</text>
<rect x="3539.5" y="2217" width="16" height="12.5" fill="#afb1b3"/>
<path d="M3534.8 2217 v-4.2 a4 4 0 0 1 8 0 v4.2" fill="none" stroke="#afb1b3" stroke-width="2.2"/>
<rect x="486.2" y="344.7" width="629" height="38.6" rx="8" fill="none" stroke="#e8402a" stroke-width="5.4"/>
<rect x="314.2" y="421.4" width="1492.8" height="97.4" rx="9.5" fill="none" stroke="#e8402a" stroke-width="6"/>
<rect x="3521" y="437" width="16" height="186" rx="8" fill="#828387" fill-opacity="0.4" stroke="#a0a2aa" stroke-opacity="0.35" stroke-width="1.5"/>
<path d="M3506.3 137.5 L3513.6 143.9 L3525 130.3" fill="none" stroke="#499c54" stroke-width="4.6"/>
<g class="art" font-size="54.2" fill="#16181c" stroke="#16181c" stroke-width="4.2" stroke-linejoin="round">
<text y="1987.7" x="216.2 248.8 314.0 346.7 379.3 411.9 705.6 738.2 770.9 836.1 868.8">___________</text>
<text y="2049.0" x="85.6 118.3 150.9 183.5 248.8 281.4 346.7 411.9 477.2 509.8 575.1 673.0 770.9 803.5 868.8 901.4 966.6 999.3 1031.9">___/////___&lt;///____</text>
<text y="2110.3" x="53.0 118.3 216.2 248.8 281.4 379.3 411.9 444.6 542.5 607.7 673.0 738.2 770.9 836.1 868.8 901.4 934.0 966.6 999.3 1031.9">/_//__//'\///__/(_-&lt;</text>
<text y="2171.6" x="53.0 85.6 118.3 150.9 183.5 281.4 314.0 346.7 411.9 444.6 477.2 509.8 542.5 575.1 607.7 640.3 673.0 705.6 770.9 803.5 836.1 868.8 901.4 934.0 966.6 999.3 1031.9">\_,_//_//_/_/_//_/\__//___/</text>
</g>
<g class="art" font-size="54.2" fill="#ffffff" stroke="#16181c" stroke-width="1.0">
<text y="2049.0" x="183.5 248.8 281.4 346.7 411.9 673.0 770.9 803.5 868.8">/////&lt;///</text>
<text y="2110.3" x="53.0 216.2 248.8 411.9 444.6 542.5 607.7 673.0 738.2 770.9 901.4 934.0 999.3 1031.9">/////'\////(-&lt;</text>
<text y="2171.6" x="53.0 118.3 183.5 281.4 346.7 411.9 477.2 542.5 607.7 640.3 705.6 770.9 868.8 901.4 1031.9">\,/////////\///</text>
</g>
<g class="art" font-size="54.2" fill="#ffffff" stroke="#ffffff" stroke-width="1.6">
<text y="1987.7" x="216.2 248.8 314.0 346.7 379.3 411.9 705.6 738.2 770.9 836.1 868.8">___________</text>
<text y="2049.0" x="85.6 118.3 150.9 477.2 509.8 575.1 901.4 966.6 999.3 1031.9">__________</text>
<text y="2110.3" x="118.3 281.4 379.3 836.1 868.8 966.6">______</text>
<text y="2171.6" x="85.6 150.9 314.0 444.6 509.8 575.1 673.0 803.5 836.1 934.0 966.6 999.3">____________</text>
</g>
<text class="wm" transform="scale(1.22,1)" y="2136" font-size="82" fill="none" stroke="#c4c4c4" stroke-width="1.1" x="1962.0 1999.8 2058.1 2096.8 2133.7 2177.6 2221.5 2257.9 2314.8 2366.2 2397.6 2442.3 2494.2 2519.2 2580.2 2659.8 2710.6 2738.9 2792.7 2831.5">initsec blog.gm7.org</text>
</svg></body></html>
